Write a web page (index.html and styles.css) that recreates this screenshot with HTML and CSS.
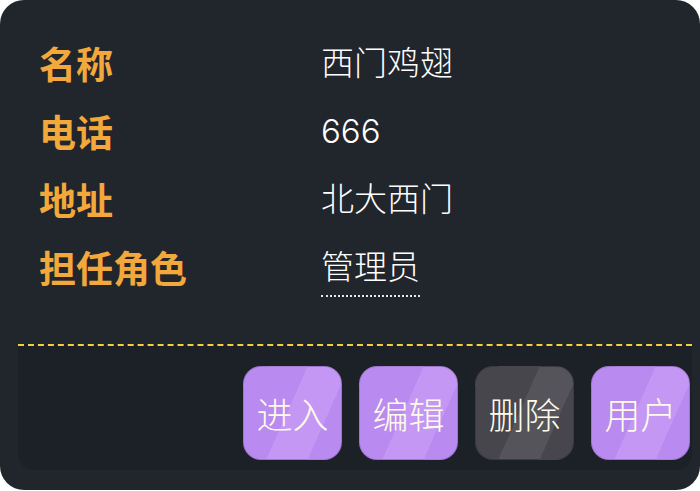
FILE: index.html
```html
<!DOCTYPE html>
<html lang="zh-CN">
<head>
<meta charset="utf-8">
<link rel="stylesheet" href="styles.css">
</head>
<body>
<div class="card">
  <div class="info">
    <div class="row"><span class="label">名称</span><span class="value">西门鸡翅</span></div>
    <div class="row"><span class="label">电话</span><span class="value">666</span></div>
    <div class="row"><span class="label">地址</span><span class="value">北大西门</span></div>
    <div class="row"><span class="label">担任角色</span><span class="value"><span class="role">管理员</span></span></div>
  </div>
  <div class="footer">
    <button class="btn btn-purple">进入</button>
    <button class="btn btn-purple">编辑</button>
    <button class="btn btn-gray">删除</button>
    <button class="btn btn-purple">用户</button>
  </div>
</div>
</body>
</html>
```

FILE: styles.css
```css
html, body {
  margin: 0;
  padding: 0;
  background: #ffffff;
}
body {
  font-family: "Noto Sans CJK SC", "Noto Sans", sans-serif;
}
.card {
  width: 700px;
  height: 490px;
  box-sizing: border-box;
  background: #21262d;
  border-radius: 24px;
  display: flex;
  flex-direction: column;
  overflow: hidden;
}
.info {
  padding: 29px 0 0 39px;
  height: 344px;
  flex: none;
  box-sizing: border-box;
}
.row {
  display: grid;
  grid-template-columns: 282px 1fr;
  height: 68px;
  align-items: center;
}
.label {
  color: #f2a83a;
  font-weight: 700;
  font-size: 37px;
  line-height: 68px;
}
.value {
  color: #ffffff;
  font-family: Inter, "Noto Sans CJK SC", sans-serif;
  font-size: 33px;
  font-weight: 300;
  line-height: 68px;
}
.role {
  display: inline-block;
  line-height: 44px;
  padding-bottom: 6px;
  border-bottom: 2px dotted #e6e6e6;
}
.footer {
  margin: 0 8px 20px 18px;
  flex: 1;
  background: #1c2027;
  border-top: 2px dashed #f2cf3c;
  border-radius: 0 0 16px 16px;
  display: flex;
  justify-content: flex-end;
  align-items: flex-start;
  gap: 17px;
  padding: 20px 2px 0 0;
}
.btn {
  width: 99px;
  height: 94px;
  flex: none;
  border-radius: 18px;
  border: 1px solid rgba(0, 0, 0, 0.15);
  padding: 0;
  font-family: "Noto Sans CJK SC", sans-serif;
  font-size: 36px;
  font-weight: 300;
  color: #fffbea;
  line-height: 1;
}
.btn-purple {
  background: linear-gradient(114deg, #b98af0 0 46%, #c497f5 46% 76%, #b98af0 76% 100%);
}
.btn-gray {
  background: linear-gradient(114deg, #47464d 0 46%, #55545b 46% 76%, #47464d 76% 100%);
}
```
